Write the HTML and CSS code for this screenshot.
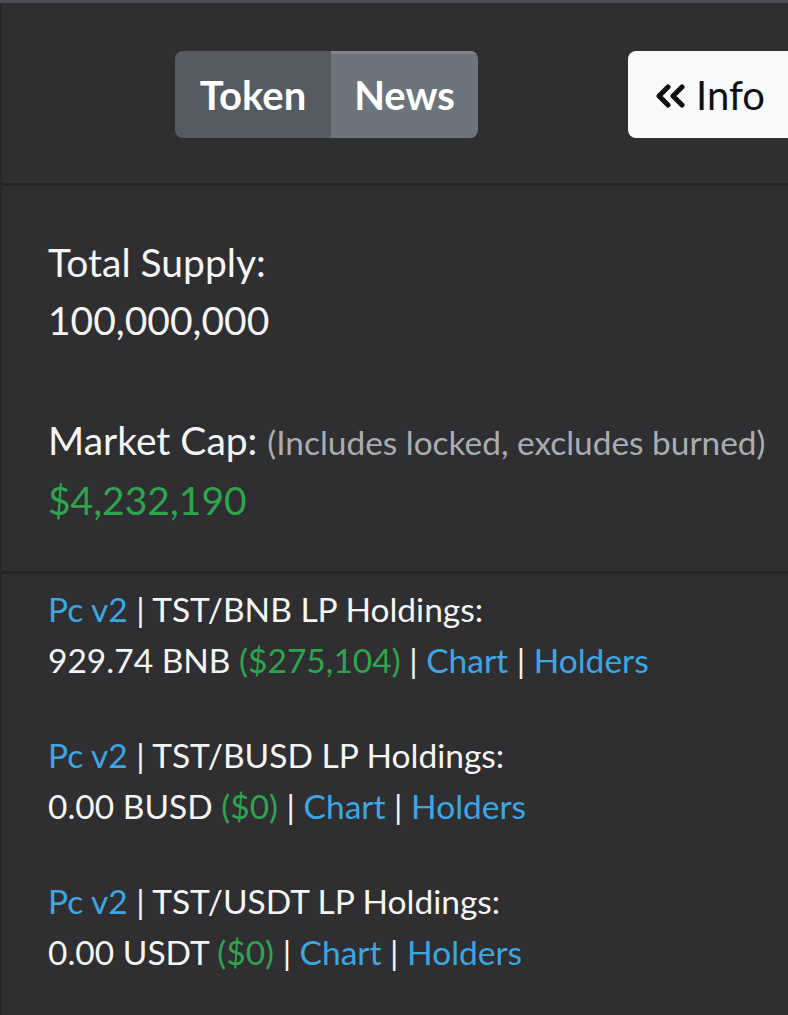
FILE: index.html
```html
<!DOCTYPE html>
<html>
<head>
<meta charset="utf-8">
<link rel="stylesheet" href="styles.css">
</head>
<body>
<div class="topbar"></div>
<div class="panel">
  <div class="header">
    <div class="btn-group">
      <span class="btn btn-token">Token</span>
      <span class="btn btn-news">News</span>
    </div>
    <div class="info-btn">
      <svg class="chev" viewBox="0 0 32 24" width="32" height="24"><path d="M14 3 L5 12 L14 21 M28 3 L19 12 L28 21" fill="none" stroke="#0d0d0d" stroke-width="5" stroke-linejoin="round" stroke-linecap="round"/></svg>
      <span>Info</span>
    </div>
  </div>
  <div class="section stats">
    <div class="stat">
      <div>Total Supply:</div>
      <div>100,000,000</div>
    </div>
    <div class="stat">
      <div>Market Cap: <span class="muted">(Includes locked, excludes burned)</span></div>
      <div class="green">$4,232,190</div>
    </div>
  </div>
  <div class="section lps">
    <div class="lp">
      <div><span class="link">Pc v2</span> | TST/BNB LP Holdings:</div>
      <div>929.74 BNB <span class="green">($275,104)</span> | <span class="link">Chart</span> | <span class="link">Holders</span></div>
    </div>
    <div class="lp">
      <div><span class="link">Pc v2</span> | TST/BUSD LP Holdings:</div>
      <div>0.00 BUSD <span class="green">($0)</span> | <span class="link">Chart</span> | <span class="link">Holders</span></div>
    </div>
    <div class="lp">
      <div><span class="link">Pc v2</span> | TST/USDT LP Holdings:</div>
      <div>0.00 USDT <span class="green">($0)</span> | <span class="link">Chart</span> | <span class="link">Holders</span></div>
    </div>
  </div>
</div>
</body>
</html>
```
FILE: styles.css
```css
html, body {
  margin: 0;
  padding: 0;
  background: #2f2f31;
  height: 100%;
  overflow: hidden;
}
body {
  font-family: Lato, "Noto Sans", sans-serif;
  color: #f5f5f5;
}
.topbar {
  height: 3px;
  background: #4b4e53;
}
.panel {
  border-left: 2px solid #262628;
  min-height: 1012px;
}
.header {
  display: flex;
  align-items: center;
  border-bottom: 3px solid #242426;
  box-sizing: border-box;
  height: 183px;
  padding-top: 3px;
}
.btn-group {
  display: flex;
  flex-shrink: 0;
  margin-left: 173px;
  border-radius: 8px;
  overflow: hidden;
  height: 87px;
}
.btn {
  display: flex;
  align-items: center;
  justify-content: center;
  flex-shrink: 0;
  color: #fff;
  font-weight: 700;
  font-size: 40px;
}
.btn-token {
  width: 156px;
  background: #545b62;
}
.btn-news {
  width: 147px;
  background: #6c757d;
  box-shadow: inset 0 3px 0 #7f878e;
}
.info-btn {
  flex-shrink: 0;
  margin-left: 150px;
  height: 87px;
  width: 180px;
  background: #f8f9fa;
  border-radius: 8px;
  display: flex;
  align-items: center;
  padding-left: 26px;
  box-sizing: border-box;
  color: #111;
  font-size: 40px;
  gap: 10px;
}
.chev {
  display: block;
  margin-top: 2px;
}
.section {
  padding-left: 46px;
}
.stats {
  padding-top: 47px;
  padding-bottom: 42px;
  border-bottom: 3px solid #242426;
  font-size: 39px;
  line-height: 58px;
}
.stat + .stat {
  margin-top: 62px;
}
.muted {
  color: #a9adb2;
  font-size: 33.4px;
}
.green {
  color: #2ea44f;
}
.link {
  color: #3ea6e3;
}
.lps {
  padding-top: 10px;
  font-size: 33.5px;
  line-height: 51px;
}
.lp + .lp {
  margin-top: 44px;
}
```
